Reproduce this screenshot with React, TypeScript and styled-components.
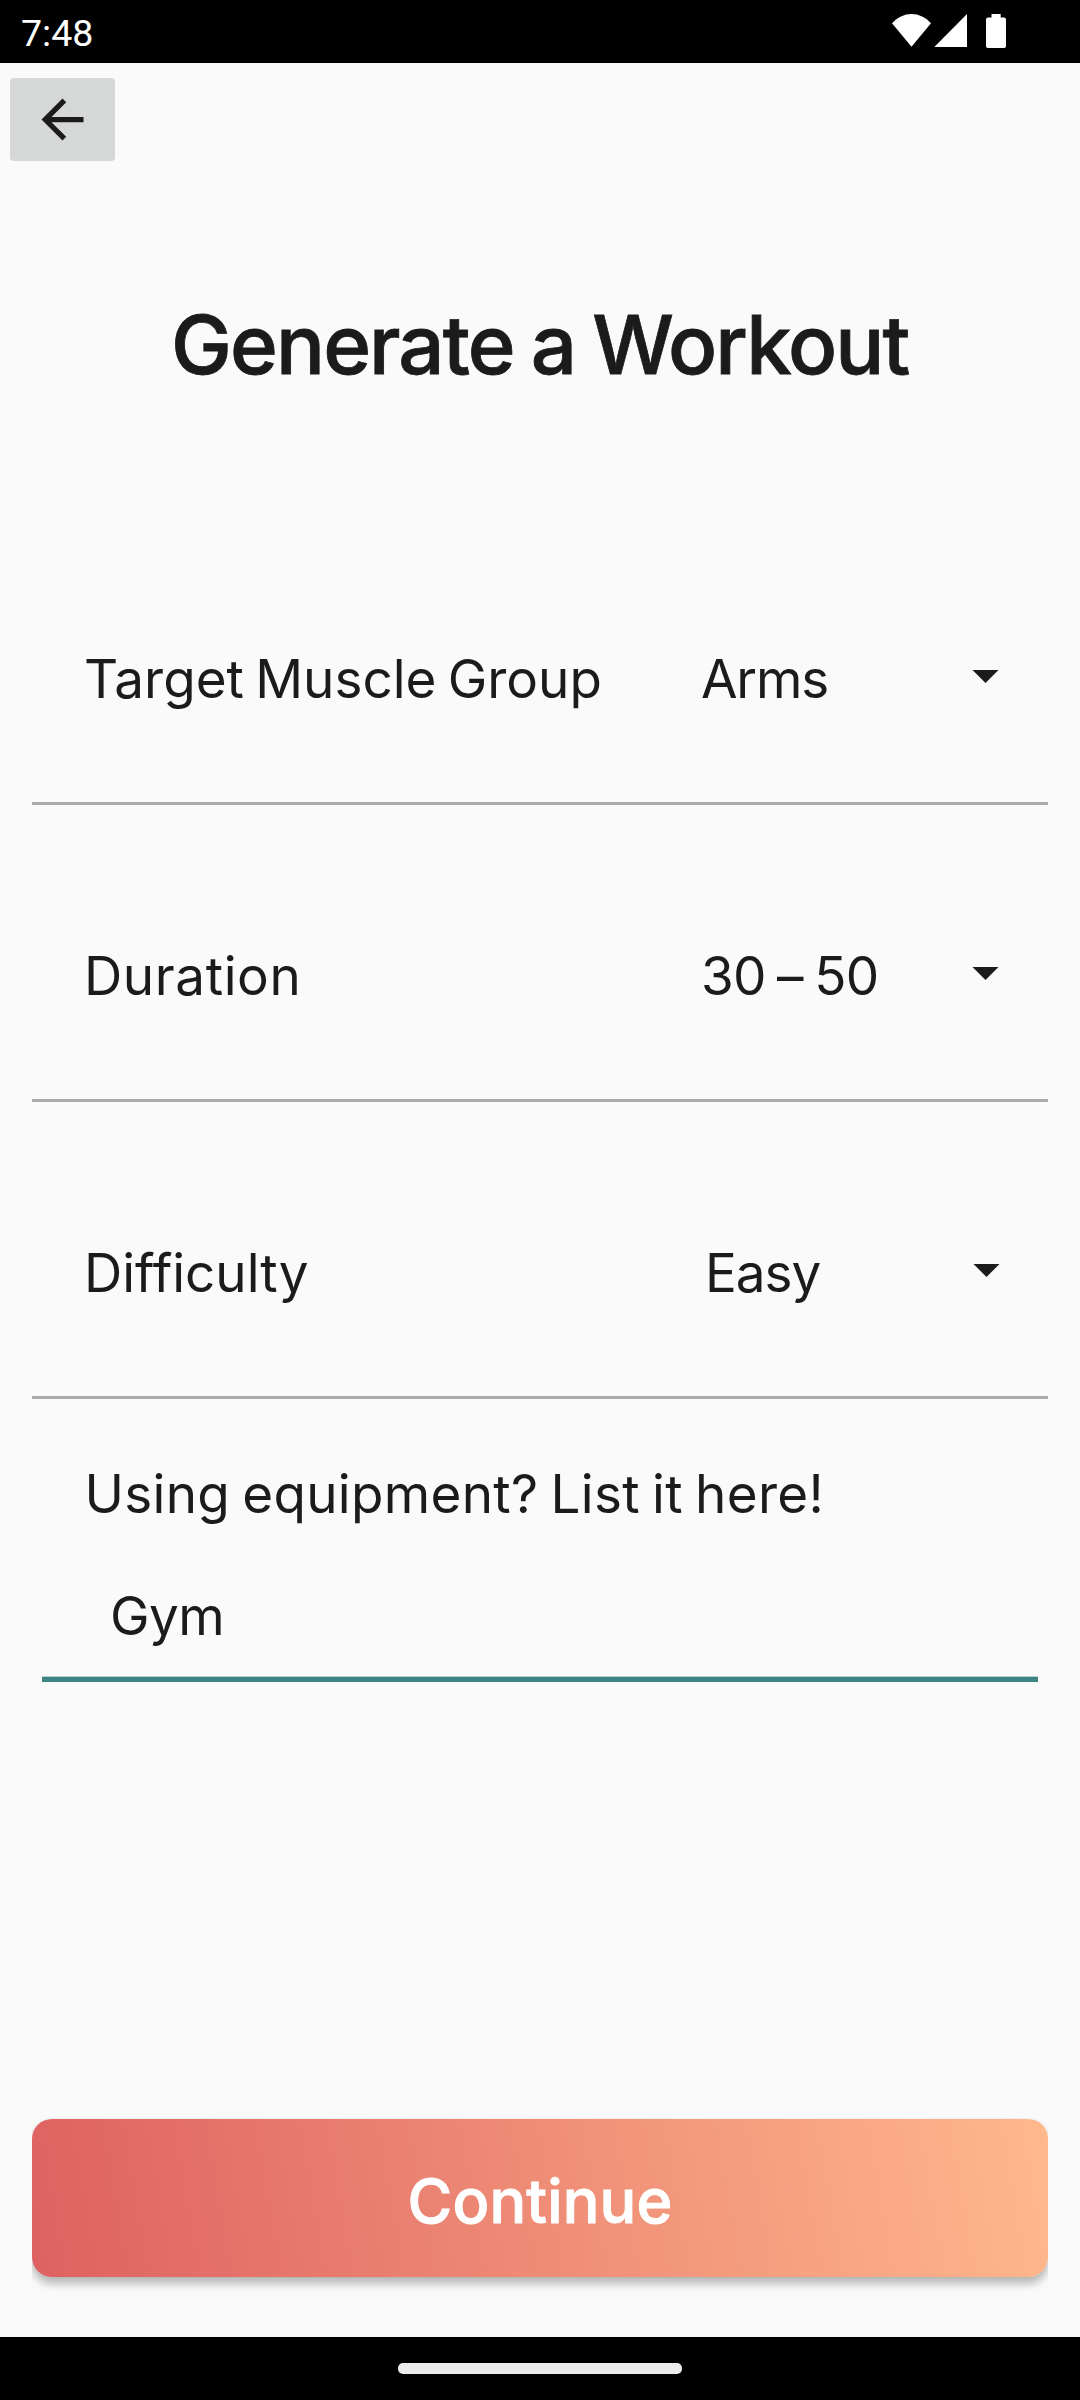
import React from "react";
import styled, { createGlobalStyle } from "styled-components";

const INK = "#1b1b1b";

const GlobalStyle = createGlobalStyle`
  *, *::before, *::after { box-sizing: border-box; }
  body { margin: 0; background: #fafafa; }
  button, input { font-family: inherit; color: inherit; border: 0; margin: 0; padding: 0; background: none; }
`;

const Screen = styled.div`
  display: flex;
  flex-direction: column;
  width: 1080px;
  height: 2400px;
  overflow: hidden;
  background: #fafafa;
  color: ${INK};
  font-family: Inter, Roboto, sans-serif;
`;

const StatusBar = styled.header`
  display: flex;
  align-items: flex-start;
  justify-content: space-between;
  height: 63px;
  padding: 0 74px 0 21px;
  background: #000;
  color: #fff;
`;

const Clock = styled.span`
  font: 400 37.5px/66px Roboto, sans-serif;
`;

const StatusIcons = styled.svg`
  display: block;
  width: 114px;
  height: 36px;
  margin-top: 13px;
`;

const Toolbar = styled.nav`
  display: flex;
  padding: 15px 10px 0;
`;

const BackButton = styled.button`
  display: flex;
  align-items: center;
  justify-content: center;
  width: 105px;
  height: 83px;
  border-radius: 4px;
  background: #d6d8d7;
`;

const BackArrow = styled.svg`
  width: 63px;
  height: 63px;
`;

const Title = styled.h1`
  margin: 134px 0 0;
  padding-left: 171px;
  font-size: 81.5px;
  font-weight: 500;
  line-height: 100px;
  letter-spacing: -1.9px;
  word-spacing: -2.8px;
  white-space: nowrap;
  -webkit-text-stroke: 0.8px ${INK};
`;

const Form = styled.main`
  display: flex;
  flex-direction: column;
  margin: 113px 32px 0;
`;

const OptionRow = styled.div`
  display: flex;
  align-items: center;
  height: 297px;
  padding: 48px 0 0 52px;
  border-bottom: 3px solid #aaa;
`;

const Label = styled.label<{ $tracking: number; $gap?: number }>`
  font-size: 53px;
  line-height: 64px;
  letter-spacing: ${(p) => p.$tracking}px;
  word-spacing: ${(p) => p.$gap ?? 0}px;
  white-space: nowrap;
`;

const Select = styled.div<{ $indent: number }>`
  display: flex;
  align-items: center;
  justify-content: space-between;
  width: 347px;
  margin-left: auto;
  padding: 0 ${(p) => 50 - p.$indent / 4}px 0 ${(p) => p.$indent}px;
`;

const Caret = styled.svg`
  display: block;
  width: 25px;
  height: 13px;
  margin-bottom: 5px;
  overflow: visible;
`;

const Equipment = styled.section`
  display: flex;
  flex-direction: column;
  padding: 63px 10px 0;
`;

const EquipmentLabel = styled(Label)`
  padding-left: 42.5px;
`;

const EquipmentInput = styled.input`
  height: 156px;
  padding: 28px 0 0 68px;
  border-bottom: 5px solid #3d8583;
  border-radius: 0;
  box-shadow: inset 0 -1px #b9d0cf;
  outline: none;
  font-size: 53px;
  letter-spacing: -0.5px;
`;

const Footer = styled.footer`
  margin: auto 32px 0;
  padding-bottom: 60px;
  clip-path: inset(-10px 0 0 0);
`;

const ContinueButton = styled.button`
  display: block;
  width: 100%;
  height: 158px;
  padding: 6px 0 0;
  border-radius: 20px;
  background: linear-gradient(80deg, #de6161, #ffb88c);
  box-shadow: 0 7px 9px rgba(0, 0, 0, 0.26), 0 0 3px rgba(0, 0, 0, 0.08);
  color: #fff;
  font-size: 61px;
  font-weight: 500;
  line-height: 74px;
  letter-spacing: 0.15px;
  -webkit-text-stroke: 1px #fff;
`;

const NavBar = styled.div`
  display: flex;
  justify-content: center;
  height: 63px;
  padding-top: 26px;
  background: #000;
`;

const HomePill = styled.div`
  width: 284px;
  height: 11px;
  border-radius: 5px;
  background: #ebebeb;
`;

type Option = {
  label: string;
  tracking: number;
  gap?: number;
  value: string;
  valueTracking: number;
  valueGap?: number;
  indent: number;
};

const options: Option[] = [
  { label: "Target Muscle Group", tracking: 0, gap: -3.6, value: "Arms", valueTracking: -1.2, indent: 0 },
  { label: "Duration", tracking: 0.6, value: "30 – 50", valueTracking: -0.8, valueGap: -2.6, indent: 0 },
  { label: "Difficulty", tracking: 0, value: "Easy", valueTracking: -1, indent: 4 },
];

export default function App() {
  return (
    <>
      <GlobalStyle />
      <Screen>
        <StatusBar>
          <Clock>7:48</Clock>
          <StatusIcons viewBox="0 0 114 36" fill="#fff">
            <path d="M0 10.3C5.5 4.4 12 1 19.5 1S33.5 4.4 39 10.3L19.5 33.8Z" />
            <path d="M42.3 34L75 1V34Z" />
            <path d="M99.5 1H108.7V4.5H112A2 2 0 0 1 114 6.5V33A2 2 0 0 1 112 35H96A2 2 0 0 1 94 33V6.5A2 2 0 0 1 96 4.5H99.5Z" />
          </StatusIcons>
        </StatusBar>

        <Toolbar>
          <BackButton aria-label="Back">
            <BackArrow viewBox="0 0 24 24" fill={INK}>
              <path d="M20 11H7.83l5.59-5.59L12 4l-8 8 8 8 1.41-1.41L7.83 13H20v-2z" />
            </BackArrow>
          </BackButton>
        </Toolbar>

        <Title>Generate a Workout</Title>

        <Form>
          {options.map((o) => (
            <OptionRow key={o.label}>
              <Label $tracking={o.tracking} $gap={o.gap}>{o.label}</Label>
              <Select $indent={o.indent}>
                <Label as="span" $tracking={o.valueTracking} $gap={o.valueGap}>{o.value}</Label>
                <Caret viewBox="0 0 25 13" fill={INK}>
                  <path d="M-0.5 0H25.5L12.5 13Z" />
                </Caret>
              </Select>
            </OptionRow>
          ))}
          <Equipment>
            <EquipmentLabel htmlFor="equipment" $tracking={0.3} $gap={-3}>
              Using equipment? List it here!
            </EquipmentLabel>
            <EquipmentInput id="equipment" defaultValue="Gym" />
          </Equipment>
        </Form>

        <Footer>
          <ContinueButton>Continue</ContinueButton>
        </Footer>

        <NavBar>
          <HomePill />
        </NavBar>
      </Screen>
    </>
  );
}
